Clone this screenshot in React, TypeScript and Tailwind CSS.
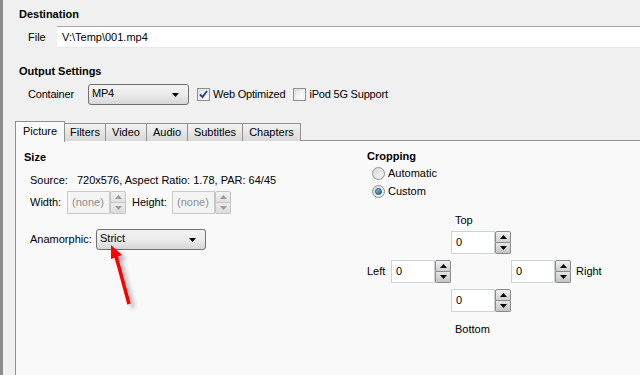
import React from "react"

function Arrow({ up, dim }: { up?: boolean; dim?: boolean }) {
  return (
    <svg width="7" height="4" viewBox="0 0 7 4" className="block">
      <path d={up ? "M0 4 L3.5 0 L7 4 Z" : "M0 0 L7 0 L3.5 4 Z"} fill={dim ? "#9a9a9a" : "#000"} />
    </svg>
  )
}

function Spin({ value, disabled, w = "w-[44px]" }: { value: string; disabled?: boolean; w?: string }) {
  return (
    <div className="flex h-[23px]">
      <div
        className={`${w} h-full border flex items-center pl-[4px] ${
          disabled ? "border-[#c9c9c9] bg-[#f4f4f4] text-[#8d8d8d]" : "border-[#cdd2d8] bg-white text-black"
        }`}
      >
        {value}
      </div>
      <div className="w-[16px] h-full flex flex-col">
        <div
          className={`flex-1 flex items-center justify-center border rounded-t-[2px] bg-gradient-to-b ${
            disabled ? "border-[#c4c4c4] from-[#f2f2f2] to-[#e0e0e0]" : "border-[#8a8a8a] from-[#f0f0f0] to-[#cfcfcf]"
          }`}
        >
          <Arrow up dim={disabled} />
        </div>
        <div
          className={`flex-1 flex items-center justify-center border border-t-0 rounded-b-[2px] bg-gradient-to-b ${
            disabled ? "border-[#c4c4c4] from-[#ececec] to-[#dcdcdc]" : "border-[#8a8a8a] from-[#e6e6e6] to-[#c4c4c4]"
          }`}
        >
          <Arrow dim={disabled} />
        </div>
      </div>
    </div>
  )
}

function Combo({ value, w }: { value: string; w: string }) {
  return (
    <div
      className={`${w} h-[21px] border border-[#707070] rounded-[3px] bg-gradient-to-b from-[#f3f3f3] via-[#ebebeb] to-[#d7d7d7] flex items-start justify-between pl-[3px] pr-[9px] pt-[2px]`}
    >
      <span>{value}</span>
      <svg width="7" height="4" viewBox="0 0 7 4" className="mt-[6px]">
        <path d="M0 0 L7 0 L3.5 4 Z" fill="#000" />
      </svg>
    </div>
  )
}

function Check({ checked }: { checked?: boolean }) {
  return (
    <div className="w-[13px] h-[13px] border border-[#8e8f8f] bg-gradient-to-br from-[#dcdcdc] to-[#fbfbfb] p-[2px]">
      <div className="w-full h-full bg-gradient-to-br from-[#e8e8e8] to-[#ffffff] relative">
        {checked && (
          <svg width="9" height="9" viewBox="0 0 9 9" className="absolute -left-[1px] -top-[1px]">
            <path d="M1 4.5 L3.5 7 L8 1" stroke="#2a3c8c" strokeWidth="2" fill="none" />
          </svg>
        )}
      </div>
    </div>
  )
}

function Radio({ checked }: { checked?: boolean }) {
  return (
    <div className="w-[13px] h-[13px] rounded-full border border-[#8e8f8f] bg-gradient-to-br from-[#d8d8d8] to-[#f8f8f8] flex items-center justify-center">
      {checked && <div className="w-[7px] h-[7px] rounded-full bg-gradient-to-br from-[#7fd0f5] to-[#16679a] border border-[#1b4f77]" />}
    </div>
  )
}

export default function App() {
  const tabs = [
    { label: "Picture", w: "w-[50px]" },
    { label: "Filters", w: "w-[41px]" },
    { label: "Video", w: "w-[41px]" },
    { label: "Audio", w: "w-[41px]" },
    { label: "Subtitles", w: "w-[55px]" },
    { label: "Chapters", w: "w-[58px]" },
  ]

  return (
    <div className="w-[640px] h-[375px] overflow-hidden bg-[#f0f0f0] border-l-[3px] border-[#8c8c8c] flex flex-col text-[11px] leading-[13px] text-black font-['Liberation_Sans',sans-serif] relative">
      {/* Destination */}
      <div className="pl-[16px] pt-[8px] font-bold">Destination</div>
      <div className="flex items-center mt-[5px]">
        <span className="ml-[25px] w-[29px]">File</span>
        <div className="flex-1 h-[22px] bg-white border-t border-t-[#a8a8a8] border-b border-b-[#e2e8ef] flex items-center pl-[5px]">
          V:\Temp\001.mp4
        </div>
      </div>

      {/* Output settings */}
      <div className="pl-[16px] mt-[17px] font-bold">Output Settings</div>
      <div className="flex items-center mt-[6px] tracking-[-0.2px]">
        <span className="ml-[25px] w-[60px]">Container</span>
        <Combo value="MP4" w="w-[101px]" />
        <div className="ml-[8px]">
          <Check checked />
        </div>
        <span className="ml-[3px]">Web Optimized</span>
        <div className="ml-[8px]">
          <Check />
        </div>
        <span className="ml-[3px]">iPod 5G Support</span>
      </div>

      {/* Tabs */}
      <div className="flex items-end ml-[12px] mt-[16px] h-[21px] relative z-10">
        {tabs.map((t, i) =>
          i === 0 ? (
            <div
              key={t.label}
              className={`${t.w} h-[21px] border border-b-0 border-[#919191] bg-[#f9f9f9] flex items-center justify-center pb-[1px]`}
            >
              {t.label}
            </div>
          ) : (
            <div
              key={t.label}
              className={`${t.w} h-[18px] border border-l-0 border-b-0 border-[#919191] bg-gradient-to-b from-[#f2f2f2] to-[#d9d9d9] flex items-center justify-center mb-[1px]`}
            >
              {t.label}
            </div>
          )
        )}
      </div>

      {/* Panel */}
      <div className="flex-1 ml-[12px] -mt-[2px] border-t border-l border-[#919191] bg-[#f9f9f9] flex">
        <div className="w-[342px] pl-[8px] pt-[10px]">
          <div className="font-bold">Size</div>
          <div className="flex mt-[10px] ml-[6px]">
            <span className="w-[47px]">Source:</span>
            <span>720x576, Aspect Ratio: 1.78, PAR: 64/45</span>
          </div>
          <div className="flex items-center mt-[4px] ml-[6px]">
            <span className="w-[37px]">Width:</span>
            <Spin value="(none)" disabled w="w-[43px]" />
            <span className="ml-[6px] w-[40px]">Height:</span>
            <Spin value="(none)" disabled w="w-[43px]" />
          </div>
          <div className="flex items-center mt-[15px] ml-[6px]">
            <span className="w-[66px]">Anamorphic:</span>
            <Combo value="Strict" w="w-[110px]" />
          </div>
        </div>

        <div className="pt-[9px] pl-[9px]">
          <div className="font-bold">Cropping</div>
          <div className="flex items-center mt-[4px] ml-[5px]">
            <Radio />
            <span className="ml-[3px]">Automatic</span>
          </div>
          <div className="flex items-center mt-[5px] ml-[5px]">
            <Radio checked />
            <span className="ml-[3px]">Custom</span>
          </div>

          <div className="grid grid-cols-[24px_60px_60px_60px_auto] items-center mt-[16px]">
            <div />
            <div />
            <div className="pl-[4px] mb-[4px]">Top</div>
            <div />
            <div />

            <div />
            <div />
            <Spin value="0" />
            <div />
            <div />

            <span className="self-center mt-[6px]">Left</span>
            <div className="mt-[6px]">
              <Spin value="0" />
            </div>
            <div />
            <div className="mt-[6px]">
              <Spin value="0" />
            </div>
            <span className="ml-[5px] mt-[6px]">Right</span>

            <div />
            <div />
            <div className="mt-[6px]">
              <Spin value="0" />
            </div>
            <div />
            <div />

            <div />
            <div />
            <div className="pl-[4px] mt-[11px]">Bottom</div>
            <div />
            <div />
          </div>
        </div>
      </div>

      {/* Annotation arrow */}
      <svg width="60" height="80" viewBox="0 0 60 80" className="absolute left-[90px] top-[238px] pointer-events-none">
        <defs>
          <filter id="sh" x="-50%" y="-50%" width="200%" height="200%">
            <feGaussianBlur stdDeviation="2" />
          </filter>
        </defs>
        <g transform="translate(4,4)" opacity="0.45" filter="url(#sh)">
          <path d="M36 66 L23 18" stroke="#555" strokeWidth="3.5" fill="none" />
          <path d="M18 7 L29 17 L18 21 Z" fill="#555" />
        </g>
        <path d="M36 66 L23 18" stroke="#ff0000" strokeWidth="3.5" fill="none" />
        <path d="M18 7 L29 17 L18 21 Z" fill="#ff0000" />
      </svg>
    </div>
  )
}
